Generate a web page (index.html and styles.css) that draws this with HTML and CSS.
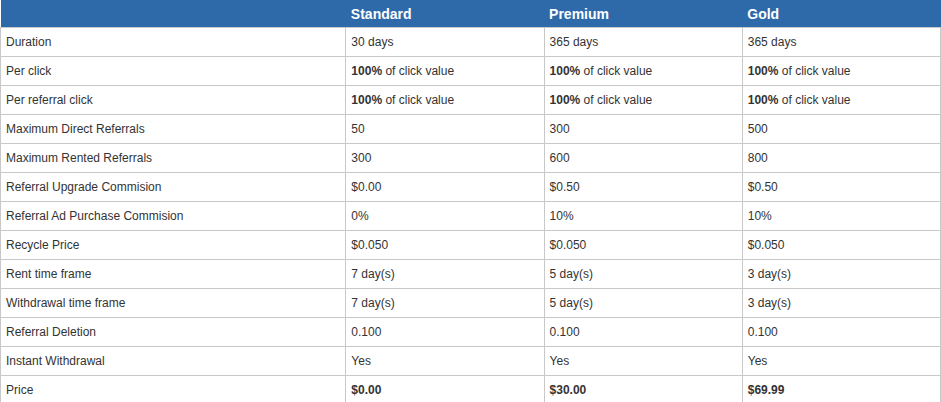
FILE: index.html
```html
<!DOCTYPE html>
<html>
<head>
<meta charset="utf-8">
<link rel="stylesheet" href="styles.css">
</head>
<body>
<table class="plans">
  <thead>
    <tr><th class="label"></th><th>Standard</th><th>Premium</th><th>Gold</th></tr>
  </thead>
  <tbody>
    <tr><td>Duration</td><td>30 days</td><td>365 days</td><td>365 days</td></tr>
    <tr><td>Per click</td><td><b>100%</b> of click value</td><td><b>100%</b> of click value</td><td><b>100%</b> of click value</td></tr>
    <tr><td>Per referral click</td><td><b>100%</b> of click value</td><td><b>100%</b> of click value</td><td><b>100%</b> of click value</td></tr>
    <tr><td>Maximum Direct Referrals</td><td>50</td><td>300</td><td>500</td></tr>
    <tr><td>Maximum Rented Referrals</td><td>300</td><td>600</td><td>800</td></tr>
    <tr><td>Referral Upgrade Commision</td><td>$0.00</td><td>$0.50</td><td>$0.50</td></tr>
    <tr><td>Referral Ad Purchase Commision</td><td>0%</td><td>10%</td><td>10%</td></tr>
    <tr><td>Recycle Price</td><td>$0.050</td><td>$0.050</td><td>$0.050</td></tr>
    <tr><td>Rent time frame</td><td>7 day(s)</td><td>5 day(s)</td><td>3 day(s)</td></tr>
    <tr><td>Withdrawal time frame</td><td>7 day(s)</td><td>5 day(s)</td><td>3 day(s)</td></tr>
    <tr><td>Referral Deletion</td><td>0.100</td><td>0.100</td><td>0.100</td></tr>
    <tr><td>Instant Withdrawal</td><td>Yes</td><td>Yes</td><td>Yes</td></tr>
    <tr class="price"><td>Price</td><td>$0.00</td><td>$30.00</td><td>$69.99</td></tr>
  </tbody>
</table>
</body>
</html>
```
FILE: styles.css
```css
html, body {
  margin: 0;
  padding: 0;
  background: #fff;
}
.plans {
  width: 941px;
  border-collapse: collapse;
  table-layout: fixed;
  font-family: "Liberation Sans", Arial, sans-serif;
  font-size: 12px;
  color: #333;
}
.plans th {
  background: #2e6aa9;
  color: #fff;
  font-size: 14px;
  font-weight: bold;
  text-align: left;
  height: 27px;
  padding: 0 5px;
  width: 188px;
  border-bottom: 1px solid #c8c8c8;
}
.plans th.label {
  width: 335px;
}
.plans td {
  height: 28px;
  padding: 0 5px;
  border: 1px solid #c8c8c8;
  border-top: none;
  vertical-align: middle;
}
.plans b {
  font-weight: bold;
}
.plans .price td:not(:first-child) {
  font-weight: bold;
}
```
